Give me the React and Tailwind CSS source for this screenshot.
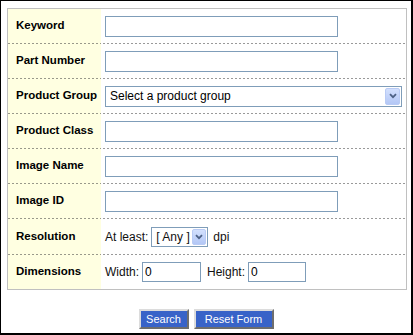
import React from "react";

const dotted =
  "pb-px bg-[linear-gradient(to_right,#333_1px,transparent_1px)] bg-[length:4px_1px] bg-bottom bg-repeat-x";

const Arrow = ({ box }) => (
  <span
    className={`absolute flex items-center justify-center rounded-[2px] border border-[#b9cbf5] bg-[linear-gradient(to_bottom,#d3e0fd,#b3c7f6)] ${box}`}
  >
    <svg width="8" height="6" viewBox="0 0 8 6">
      <path d="M1 1.2 L4 4.2 L7 1.2" fill="none" stroke="#4d6185" strokeWidth="1.8" />
    </svg>
  </span>
);

const Row = ({ label, h, last, children }) => (
  <>
    <div
      className={`${h} ${last ? "" : dotted} bg-[#ffffe1] flex items-center pl-2 text-[11.5px] font-bold text-black`}
    >
      {label}
    </div>
    <div className={`${h} ${last ? "" : dotted} flex items-center pl-1 text-[12px] text-[#111]`}>
      {children}
    </div>
  </>
);

const TextBox = ({ w, value }) => (
  <input
    type="text"
    defaultValue={value}
    className={`${w} h-[21px] border border-[#7f9db9] bg-white px-[2px] text-[12px] text-black outline-none`}
  />
);

const App = () => {
  return (
    <div className="w-[413px] h-[335px] bg-white border-black border-t border-l border-r-2 border-b-2 pt-[7px] pl-[6px] font-['Liberation_Sans',Arial,sans-serif]">
      <div className="w-[400px] border border-[#c0c0c0] grid grid-cols-[93px_1fr]">
        <Row label="Keyword" h="h-[35px]">
          <TextBox w="w-[233px]" />
        </Row>
        <Row label="Part Number" h="h-[35px]">
          <TextBox w="w-[233px]" />
        </Row>
        <Row label="Product Group" h="h-[35px]">
          <div className="relative w-[297px] h-[21px]">
            <select className="appearance-none w-full h-full border border-[#7f9db9] bg-white pl-[4px] text-[12px] text-black outline-none">
              <option>Select a product group</option>
            </select>
            <Arrow box="right-[2px] top-[2px] w-[15px] h-[17px]" />
          </div>
        </Row>
        <Row label="Product Class" h="h-[35px]">
          <TextBox w="w-[233px]" />
        </Row>
        <Row label="Image Name" h="h-[35px]">
          <TextBox w="w-[233px]" />
        </Row>
        <Row label="Image ID" h="h-[35px]">
          <TextBox w="w-[233px]" />
        </Row>
        <Row label="Resolution" h="h-[36px]">
          <span>At least:</span>
          <div className="relative ml-[3px] w-[57px] h-[20px]">
            <select className="appearance-none w-full h-full border border-[#7f9db9] bg-white pl-[4px] text-[12px] text-[#111] outline-none">
              <option>[ Any ]</option>
            </select>
            <Arrow box="right-[2px] top-[2px] w-[14px] h-[16px]" />
          </div>
          <span className="ml-[5px]">dpi</span>
        </Row>
        <Row label="Dimensions" h="h-[34px]" last>
          <span>Width:</span>
          <input
            type="text"
            defaultValue="0"
            className="ml-[3px] w-[59px] h-[20px] border border-[#7f9db9] bg-white px-[2px] text-[12px] text-black outline-none"
          />
          <span className="ml-[6px]">Height:</span>
          <input
            type="text"
            defaultValue="0"
            className="ml-[3px] w-[58px] h-[20px] border border-[#7f9db9] bg-white px-[2px] text-[12px] text-black outline-none"
          />
        </Row>
      </div>
      <div className="mt-[19px] -ml-[6px] flex justify-center gap-[5px]">
        <button className="w-[50px] h-[20px] border-2 border-t-[#dcdcdc] border-l-[#dcdcdc] border-r-[#6e6e6e] border-b-[#6e6e6e] bg-[#3863c8] text-[11px] text-white">
          Search
        </button>
        <button className="w-[80px] h-[20px] border-2 border-t-[#dcdcdc] border-l-[#dcdcdc] border-r-[#6e6e6e] border-b-[#6e6e6e] bg-[#3863c8] text-[11px] text-white">
          Reset Form
        </button>
      </div>
    </div>
  );
};

export default App;
